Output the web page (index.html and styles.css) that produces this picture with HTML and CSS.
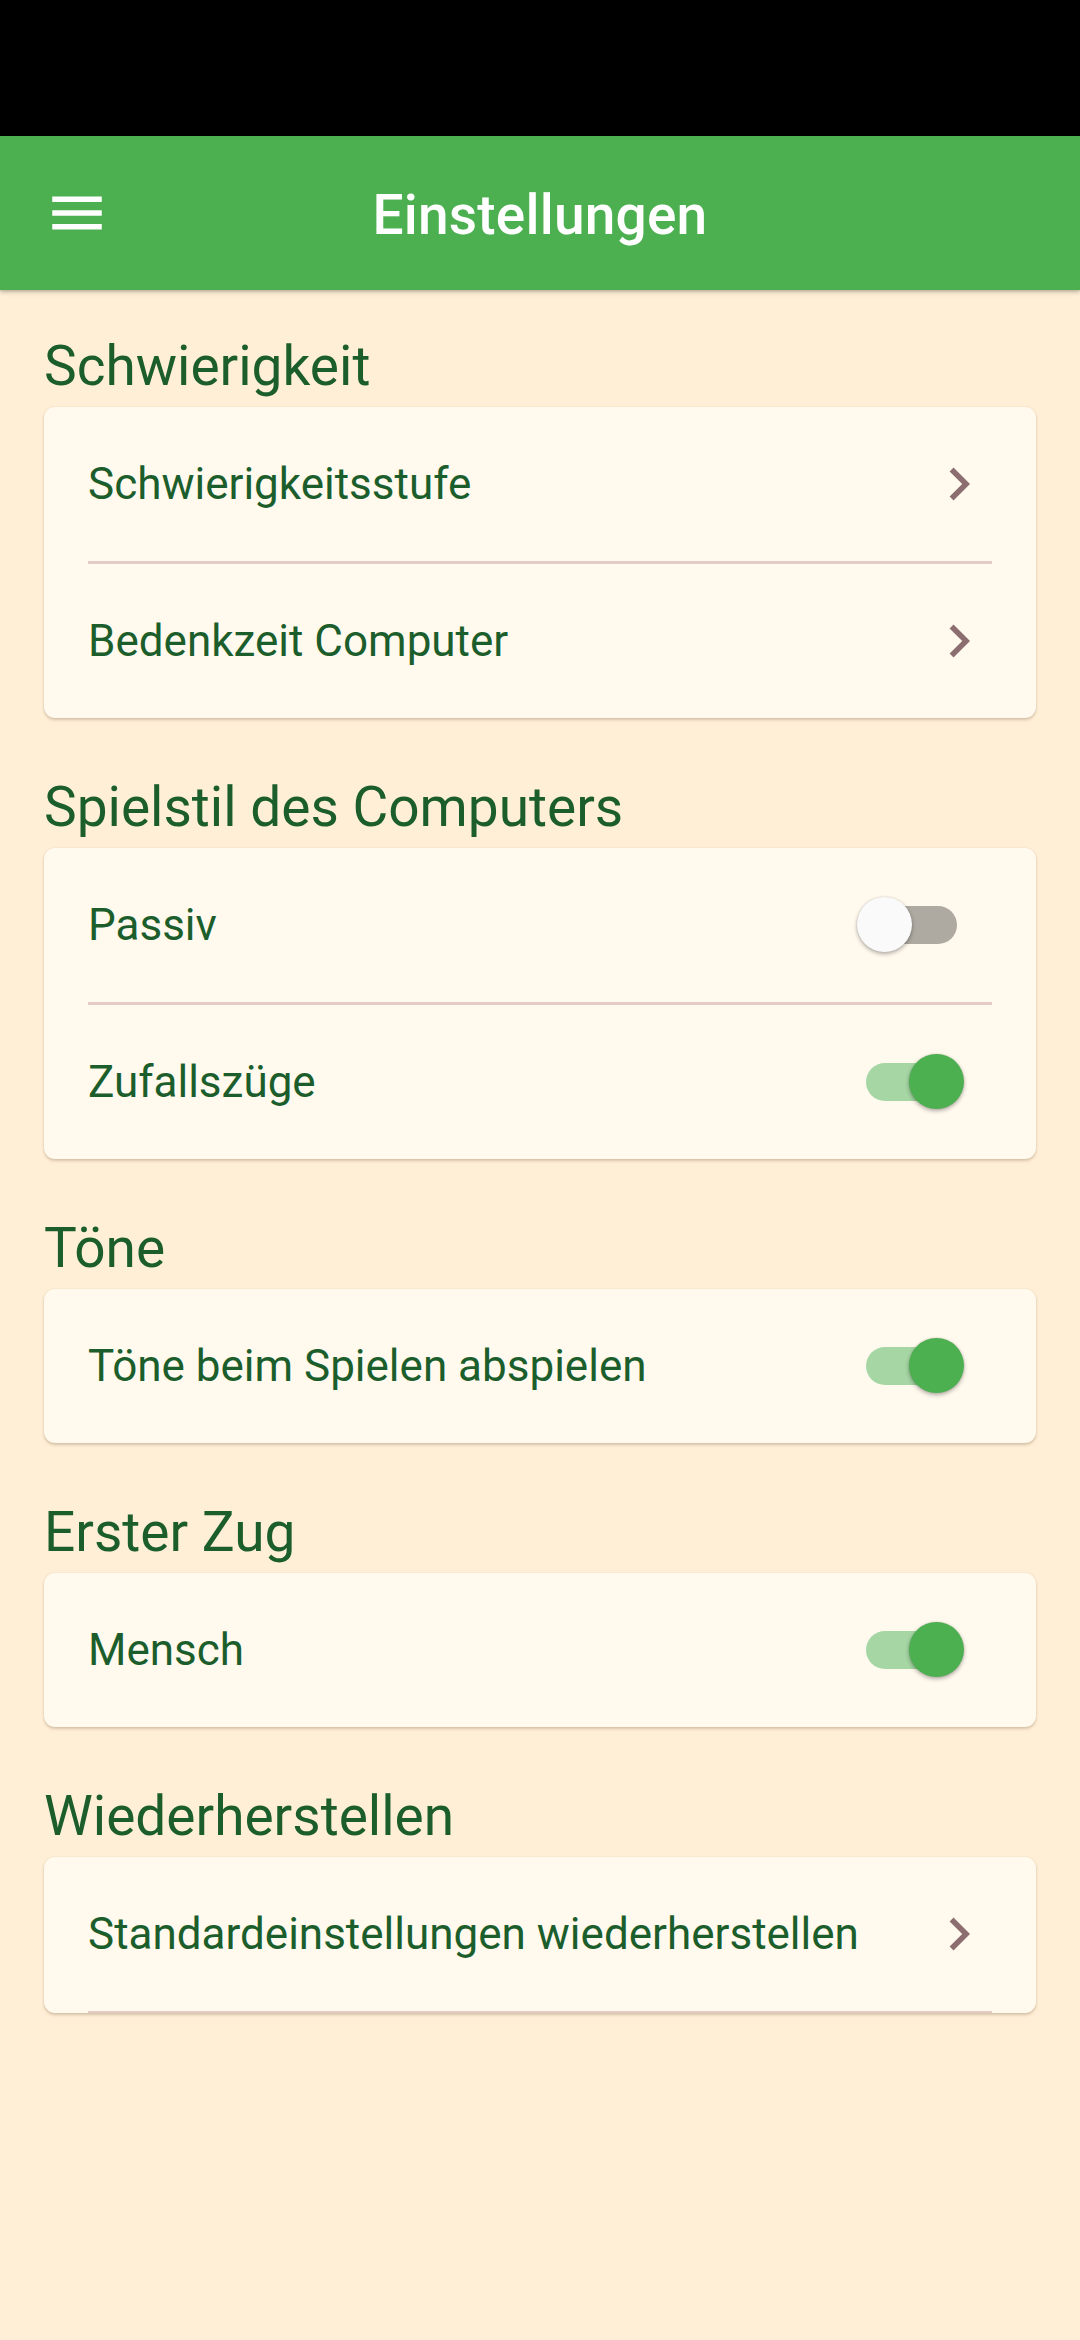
FILE: index.html
```html
<!DOCTYPE html>
<html lang="de">
<head>
<meta charset="utf-8">
<title>Einstellungen</title>
<link rel="stylesheet" href="styles.css">
</head>
<body>
<div class="status-bar"></div>
<header class="app-bar">
  <div class="app-bar-lead">
    <svg class="menu-icon" viewBox="0 0 24 24" width="66" height="66" aria-hidden="true">
      <path d="M3 18h18v-2H3v2zm0-5h18v-2H3v2zm0-7v2h18V6H3z" fill="#ffffff"/>
    </svg>
  </div>
  <h1 class="app-title">Einstellungen</h1>
  <div class="app-bar-trail"></div>
</header>

<main class="settings">
  <section class="group">
    <h2 class="group-title">Schwierigkeit</h2>
    <div class="card">
      <div class="row">
        <span class="label">Schwierigkeitsstufe</span>
        <svg class="chevron" viewBox="0 0 24 24" width="66" height="66" aria-hidden="true"><path d="M10 6L8.59 7.41 13.17 12l-4.58 4.59L10 18l6-6z"/></svg>
      </div>
      <div class="divider"></div>
      <div class="row">
        <span class="label">Bedenkzeit Computer</span>
        <svg class="chevron" viewBox="0 0 24 24" width="66" height="66" aria-hidden="true"><path d="M10 6L8.59 7.41 13.17 12l-4.58 4.59L10 18l6-6z"/></svg>
      </div>
    </div>
  </section>

  <section class="group">
    <h2 class="group-title">Spielstil des Computers</h2>
    <div class="card">
      <div class="row">
        <span class="label">Passiv</span>
        <span class="switch"><span class="track"></span><span class="thumb"></span></span>
      </div>
      <div class="divider"></div>
      <div class="row">
        <span class="label">Zufallszüge</span>
        <span class="switch on"><span class="track"></span><span class="thumb"></span></span>
      </div>
    </div>
  </section>

  <section class="group">
    <h2 class="group-title">Töne</h2>
    <div class="card">
      <div class="row">
        <span class="label">Töne beim Spielen abspielen</span>
        <span class="switch on"><span class="track"></span><span class="thumb"></span></span>
      </div>
    </div>
  </section>

  <section class="group">
    <h2 class="group-title">Erster Zug</h2>
    <div class="card">
      <div class="row">
        <span class="label">Mensch</span>
        <span class="switch on"><span class="track"></span><span class="thumb"></span></span>
      </div>
    </div>
  </section>

  <section class="group">
    <h2 class="group-title">Wiederherstellen</h2>
    <div class="card">
      <div class="row">
        <span class="label">Standardeinstellungen wiederherstellen</span>
        <svg class="chevron" viewBox="0 0 24 24" width="66" height="66" aria-hidden="true"><path d="M10 6L8.59 7.41 13.17 12l-4.58 4.59L10 18l6-6z"/></svg>
      </div>
      <div class="divider divider-last"></div>
    </div>
  </section>
</main>
</body>
</html>
```

FILE: styles.css
```css
html {
  background: #ffefd6;
}

body {
  margin: 0;
  min-height: 2340px;
  background: #ffefd6;
  font-family: Roboto, "Noto Sans", "Liberation Sans", sans-serif;
  color: #1b5e2c;
}

.status-bar {
  height: 136px;
  background: #000000;
}

.app-bar {
  position: relative;
  z-index: 2;
  height: 154px;
  background: #4caf50;
  display: grid;
  grid-template-columns: 1fr auto 1fr;
  align-items: center;
  box-shadow: 0 2px 5px rgba(0, 0, 0, 0.22), 0 1px 2px rgba(0, 0, 0, 0.12);
}

.app-bar-lead {
  display: flex;
  align-items: center;
  padding-left: 44px;
}

.menu-icon {
  display: block;
}

.app-title {
  margin: 4px 0 0;
  font-size: 55px;
  font-weight: 500;
  color: #ffffff;
  line-height: 64px;
  letter-spacing: 0.2px;
}

.settings {
  padding: 0 44px 40px;
}

.group-title {
  margin: 57px 0 9px;
  font-size: 55px;
  font-weight: 400;
  line-height: 64px;
  color: #1b5e2c;
}

.group:first-child .group-title {
  margin-top: 44px;
}

.card {
  background: #fff9ee;
  border-radius: 11px;
  box-shadow: 0 2px 3px rgba(120, 90, 60, 0.28), 0 0 2px rgba(120, 90, 60, 0.12);
  overflow: hidden;
}

.row {
  height: 154px;
  padding: 0 44px;
  display: flex;
  align-items: center;
  justify-content: space-between;
}

.label {
  font-size: 44px;
  line-height: 52px;
  color: #1b5e2c;
}

.chevron {
  display: block;
  fill: #8d6e70;
  flex: none;
}

.divider {
  height: 2.75px;
  margin: 0 44px;
  background: #e6cbc4;
}

.switch {
  position: relative;
  flex: none;
  width: 107px;
  height: 55px;
  margin-right: 28px;
}

.track {
  position: absolute;
  left: 8.5px;
  top: 8.5px;
  width: 91px;
  height: 38px;
  border-radius: 19px;
  background: #aeaaa2;
}

.thumb {
  position: absolute;
  left: 0;
  top: 0;
  width: 55px;
  height: 55px;
  border-radius: 50%;
  background: #fafafa;
  box-shadow: 0 2px 4px rgba(0, 0, 0, 0.3), 0 0 2px rgba(0, 0, 0, 0.12);
}

.switch.on .track {
  background: #a5d6a3;
}

.switch.on .thumb {
  left: 52px;
  background: #4caf50;
}
```
